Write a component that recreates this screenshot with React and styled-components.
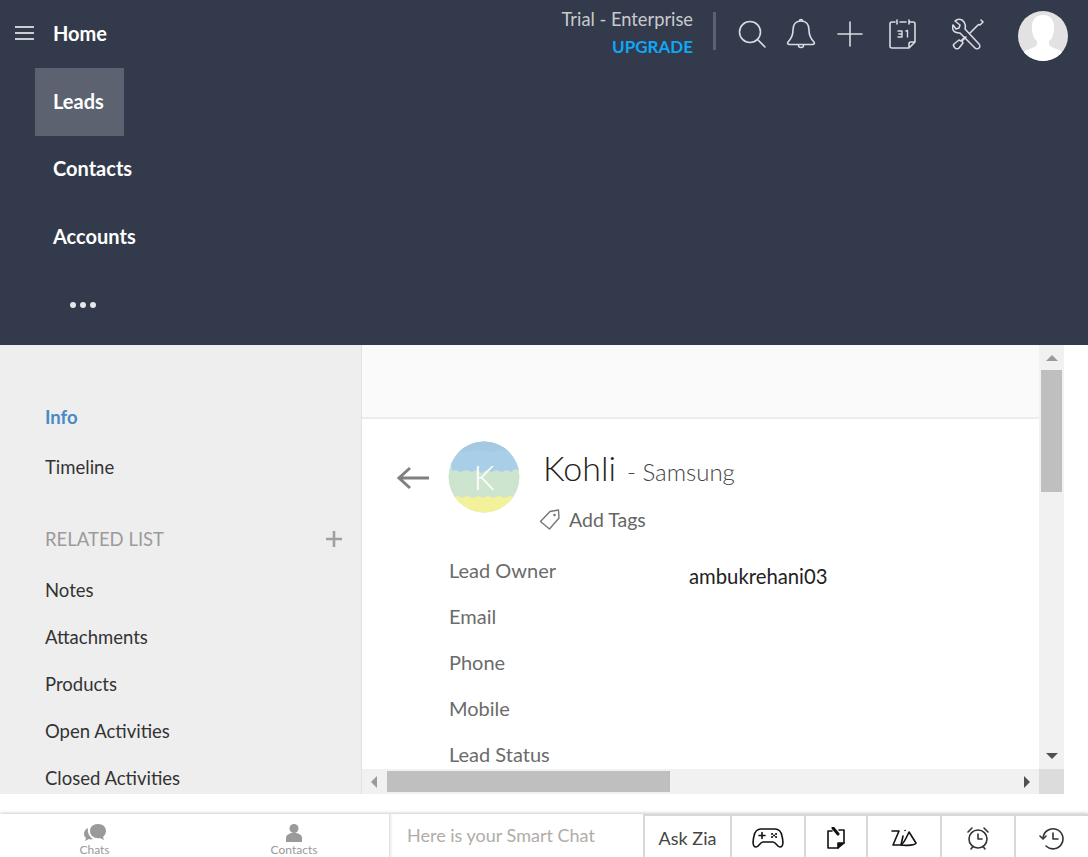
import React from "react";
import styled, { createGlobalStyle } from "styled-components";

const Global = createGlobalStyle`
  html, body { margin: 0; padding: 0; background: #fff; }
  body { font-family: "Lato", "Open Sans", sans-serif; overflow: hidden; }
  * { box-sizing: border-box; }
`;

const Page = styled.div`
  width: 1088px;
  height: 857px;
  display: flex;
  flex-direction: column;
  overflow: hidden;
`;

/* ---- top bar ---- */
const Header = styled.header`
  height: 345px;
  flex: none;
  background: #333a4b;
  display: flex;
  flex-direction: column;
`;

const TopRow = styled.div`
  height: 68px;
  flex: none;
  display: flex;
  align-items: center;
  padding: 0 20px 0 15px;
`;

const Burger = styled.div`
  width: 19px;
  height: 14px;
  margin-right: 19px;
  margin-bottom: 2px;
  display: flex;
  flex-direction: column;
  justify-content: space-between;
  span {
    height: 2px;
    background: #fff;
    opacity: 0.75;
  }
`;

const HomeLink = styled.div`
  color: #fff;
  font-size: 20px;
  font-weight: 700;
  flex: 1;
  margin-bottom: 3px;
`;

const Trial = styled.div`
  width: 152px;
  padding-right: 20px;
  text-align: right;
  display: flex;
  flex-direction: column;
  gap: 7px;
  margin-bottom: 4px;
`;

const TrialText = styled.div`
  color: #c8cad0;
  font-size: 18.3px;
  line-height: 22px;
  white-space: nowrap;
`;

const Upgrade = styled.div`
  color: #0fa7f5;
  font-size: 17px;
  font-weight: 700;
  line-height: 20px;
`;

const Divider = styled.div`
  width: 3px;
  height: 38px;
  background: #5b6170;
  margin-right: 22px;
  margin-bottom: 7px;
`;

const TopIcon = styled.svg`
  flex: none;
  margin-right: ${(p) => p.$gap || 0}px;
  fill: none;
  stroke: #d9dbe0;
  stroke-width: 1.6;
  stroke-linecap: round;
  stroke-linejoin: round;
`;

const Avatar = styled.div`
  width: 50px;
  height: 50px;
  border-radius: 50%;
  overflow: hidden;
  background: #e2e2e2;
  margin-left: 34px;
  margin-top: 3px;
`;

const NavList = styled.nav`
  display: flex;
  flex-direction: column;
  align-items: flex-start;
  padding-left: 35px;
`;

const NavItem = styled.div`
  height: 67.5px;
  padding: 0 20px 2px 18px;
  display: flex;
  align-items: center;
  color: #fff;
  font-size: 20px;
  font-weight: 700;
  background: ${(p) => (p.$active ? "#5c626f" : "transparent")};
`;

const Dots = styled.div`
  display: flex;
  gap: 4px;
  padding-left: 17px;
  margin-top: 3px;
  span {
    width: 6px;
    height: 6px;
    border-radius: 50%;
    background: #e6e7ea;
  }
`;

/* ---- middle ---- */
const Body = styled.div`
  height: 449px;
  flex: none;
  display: flex;
  overflow: hidden;
`;

const Side = styled.aside`
  width: 362px;
  flex: none;
  background: #eeeeee;
  border-right: 1px solid #e2e2e2;
  padding: 60px 19px 0 45px;
  overflow: hidden;
`;

const SideItem = styled.div`
  font-size: 18.5px;
  line-height: 24px;
  color: ${(p) => (p.$active ? "#4a88c7" : "#333")};
  font-weight: ${(p) => (p.$active ? 700 : 400)};
  margin-bottom: ${(p) => p.$mb || 23}px;
`;

const RelatedHead = styled.div`
  display: flex;
  align-items: center;
  justify-content: space-between;
  height: 24px;
  margin-bottom: 27px;
  color: #9b9b9b;
  font-size: 18.5px;
`;

const Main = styled.div`
  width: 702px;
  flex: none;
  display: grid;
  grid-template-columns: 677px 25px;
  grid-template-rows: 424px 25px;
`;

const Content = styled.div`
  overflow: hidden;
  background: #fff;
`;

const Strip = styled.div`
  height: 74px;
  background: #fafafa;
  border-bottom: 2px solid #ececec;
`;

const Record = styled.div`
  padding: 22px 0 0 34px;
`;

const RecordHead = styled.div`
  display: flex;
  align-items: flex-start;
`;

const Back = styled.svg`
  margin: 25px 18px 0 0;
  flex: none;
`;

const Photo = styled.svg`
  flex: none;
  margin-right: 23px;
`;

const TitleBlock = styled.div`
  display: flex;
  flex-direction: column;
`;

const Title = styled.div`
  display: flex;
  align-items: baseline;
  gap: 11px;
  height: 48px;
  padding-top: 6px;
`;

const Name = styled.span`
  font-size: 34px;
  font-weight: 300;
  color: #222;
`;

const Company = styled.span`
  font-size: 24px;
  font-weight: 300;
  color: #444;
`;

const TagRow = styled.div`
  display: flex;
  align-items: center;
  gap: 8px;
  margin-top: 19px;
  margin-left: -4px;
  color: #666;
  font-size: 19.5px;
`;

const Fields = styled.div`
  display: flex;
  flex-direction: column;
  padding-left: 53px;
  margin-top: 25px;
`;

const Field = styled.div`
  display: flex;
  height: 46px;
`;

const Label = styled.div`
  width: 240px;
  font-size: 20px;
  line-height: 28px;
  color: #6b6b6b;
`;

const Value = styled.div`
  font-size: 20.3px;
  line-height: 24px;
  padding-top: 8px;
  color: #222;
`;

const VBar = styled.div`
  background: #f1f1f1;
  display: flex;
  flex-direction: column;
  align-items: center;
  padding-top: 10px;
  padding-bottom: 10px;
`;

const VThumb = styled.div`
  width: 21px;
  height: 122px;
  background: #bfbfbf;
  margin-top: 9px;
  margin-bottom: auto;
`;

const HBar = styled.div`
  background: #f1f1f1;
  display: flex;
  align-items: center;
  padding: 0 9px 0 9px;
`;

const HThumb = styled.div`
  width: 283px;
  height: 21px;
  background: #bfbfbf;
  margin-left: 10px;
  margin-right: auto;
`;

const Corner = styled.div`
  background: #dcdcdc;
`;

const Up = styled.div`
  width: 0;
  height: 0;
  border-left: 6px solid transparent;
  border-right: 6px solid transparent;
  border-bottom: 6px solid #9a9a9a;
`;

const Down = styled(Up)`
  border-bottom: 0;
  border-top: 6px solid #505050;
`;

const LeftArrow = styled.div`
  width: 0;
  height: 0;
  border-top: 6px solid transparent;
  border-bottom: 6px solid transparent;
  border-right: 6px solid #9a9a9a;
`;

const RightArrow = styled.div`
  width: 0;
  height: 0;
  border-top: 6px solid transparent;
  border-bottom: 6px solid transparent;
  border-left: 6px solid #505050;
`;

/* ---- bottom bar ---- */
const Footer = styled.footer`
  margin-top: 20px;
  height: 43px;
  flex: none;
  display: flex;
  background: #fff;
  box-shadow: 0 -1px 3px rgba(0, 0, 0, 0.2);
`;

const Tab = styled.div`
  width: ${(p) => p.$w}px;
  padding-left: ${(p) => p.$pl || 0}px;
  flex: none;
  display: flex;
  flex-direction: column;
  align-items: center;
  padding-top: 10px;
  font-size: 12px;
  line-height: 13px;
  color: #9a9a9a;
  gap: 1px;
`;

const SmartChat = styled.div`
  width: 254px;
  flex: none;
  border-left: 1px solid #e2e2e2;
  box-shadow: inset 3px 0 3px -2px rgba(0, 0, 0, 0.1);
  padding-left: 17px;
  font-size: 18px;
  line-height: 43px;
  color: #b0aca8;
`;

const ToolCell = styled.div`
  width: ${(p) => p.$w}px;
  flex: none;
  border-left: 2px solid #d8d8d8;
  border-top: 2px solid #d8d8d8;
  display: flex;
  align-items: center;
  justify-content: center;
  font-size: 18px;
  color: #444;
  padding-top: 3px;
`;

const ToolIcon = styled.svg`
  fill: none;
  stroke: ${(p) => p.$stroke || "#111"};
  stroke-width: 1.6;
  stroke-linecap: round;
  stroke-linejoin: round;
`;

const sideLinks = ["Notes", "Attachments", "Products", "Open Activities", "Closed Activities"];
const fields = [
  ["Lead Owner", "ambukrehani03"],
  ["Email"],
  ["Phone"],
  ["Mobile"],
  ["Lead Status"],
];

export default function App() {
  return (
    <Page>
      <Global />
      <Header>
        <TopRow>
          <Burger><span /><span /><span /></Burger>
          <HomeLink>Home</HomeLink>
          <Trial>
            <TrialText>Trial - Enterprise</TrialText>
            <Upgrade>UPGRADE</Upgrade>
          </Trial>
          <Divider />
          <TopIcon width="28" height="28" viewBox="0 0 28 28" $gap={20}>
            <circle cx="12" cy="12" r="10.5" />
            <path d="M19.5 19.5L27 27" />
          </TopIcon>
          <TopIcon width="30" height="32" viewBox="0 0 30 32" $gap={21}>
            <path d="M15 3c-5.500 0-8 4-8 9 0 6-2 9-5 12-1 1.500 0 2.500 1.500 2.500h23c1.500 0 2.500-1 1.500-2.500-3-3-5-6-5-12 0-5-2.500-9-8-9z" />
            <path d="M13.500 3a1.500 1.500 0 0 1 3 0M12.500 27.500a2.500 2 0 0 0 5 0" />
          </TopIcon>
          <TopIcon width="26" height="26" viewBox="0 0 26 26" $gap={26}>
            <path d="M13 1v24M1 13h24" />
          </TopIcon>
          <TopIcon width="28" height="30" viewBox="0 0 28 30" $gap={35}>
            <path d="M6 3H3a2 2 0 0 0-2 2v22a2 2 0 0 0 2 2h17l6-6V5a2 2 0 0 0-2-2h-3M11 3h6M8 1v4M20 1v4M20 29v-4a2 2 0 0 1 2-2h4" />
            <path d="M9 12h4v3h-3h3v3H9M17 12l1.500-.5V18" strokeWidth="1.400" />
          </TopIcon>
          <TopIcon width="32" height="32" viewBox="0 0 32 32">
            <path d="M10 2c-2-1-5-1-7 1l5 4-1 3-3 1-3-4c-1 3 0 6 2 7 2 1 4 1 5 1l15 15c1 1 3 1 4 0s1-3 0-4L13 11c1-3 0-7-3-9z" />
            <path d="M29 2l2 2-3 3-1.500-.5L18 15M14 19l-4 4 1 2-4 5c-1 1-3 1-4 0s-2-3-1-4l5-4 2 1 4-4" />
          </TopIcon>
          <Avatar>
            <svg width="50" height="50" viewBox="0 0 50 50">
              <path fill="#fff" d="M25 4c-8 0-12 6-11 15 .5 5 2 9 5 11v4c-1 2-8 4-12 6l-3 3c5 5 13 7 21 7s16-2 21-7l-3-3c-4-2-11-4-12-6v-4c3-2 4.500-6 5-11 1-9-3-15-11-15z" />
            </svg>
          </Avatar>
        </TopRow>
        <NavList>
          <NavItem $active>Leads</NavItem>
          <NavItem>Contacts</NavItem>
          <NavItem>Accounts</NavItem>
          <NavItem><Dots><span /><span /><span /></Dots></NavItem>
        </NavList>
      </Header>

      <Body>
        <Side>
          <SideItem $active $mb={26}>Info</SideItem>
          <SideItem $mb={48}>Timeline</SideItem>
          <RelatedHead>
            RELATED LIST
            <svg width="16" height="16" viewBox="0 0 16 16">
              <path d="M8 0v16M0 8h16" stroke="#a0a0a0" strokeWidth="2.600" />
            </svg>
          </RelatedHead>
          {sideLinks.map((s) => <SideItem key={s}>{s}</SideItem>)}
        </Side>
        <Main>
          <Content>
            <Strip />
            <Record>
              <RecordHead>
                <Back width="34" height="24" viewBox="0 0 34 24" fill="none" stroke="#808080" strokeWidth="3">
                  <path d="M33 12H3M14 2L3 12l11 10" />
                </Back>
                <Photo width="72" height="72" viewBox="0 0 72 72">
                  <defs>
                    <clipPath id="disc"><circle cx="36" cy="36" r="35.500" /></clipPath>
                  </defs>
                  <g clipPath="url(#disc)">
                    <rect width="72" height="72" fill="#cde5cf" />
                    <path d="M0 0h72v30l-5-2-4 3-5-2-4 2-6-2-4 2-6-2-4 3-6-3-4 2-6-2-6 2-4-2-4 1z" fill="#a9cfe8" />
                    <path d="M0 0h72v8l-8 2-10-1-12 2-14-2-12 2-16-2z" fill="#a5c9e3" />
                    <path d="M0 55l5 2 5-2 4 2 5-2 6 2 5-2 5 2 5-2 5 2 6-2 5 2 6-2 6 2v16H0z" fill="#f3f19a" />
                  </g>
                  <text x="36" y="49" fontFamily="Lato, sans-serif" fontSize="33" fill="#fff" fontWeight="300" textAnchor="middle">K</text>
                </Photo>
                <TitleBlock>
                  <Title>
                    <Name>Kohli</Name>
                    <Company>- Samsung</Company>
                  </Title>
                  <TagRow>
                    <svg width="22" height="22" viewBox="0 0 22 22" fill="none" stroke="#777" strokeWidth="1.400" strokeLinejoin="round">
                      <path d="M1.500 12.500L11 2.500l8.500-1.500.5 8-9.500 11z" />
                      <circle cx="15.500" cy="6" r="1.300" fill="#777" stroke="none" />
                    </svg>
                    Add Tags
                  </TagRow>
                </TitleBlock>
              </RecordHead>
              <Fields>
                {fields.map(([label, value]) => (
                  <Field key={label}>
                    <Label>{label}</Label>
                    {value && <Value>{value}</Value>}
                  </Field>
                ))}
              </Fields>
            </Record>
          </Content>
          <VBar>
            <Up />
            <VThumb />
            <Down />
          </VBar>
          <HBar>
            <LeftArrow />
            <HThumb />
            <RightArrow />
          </HBar>
          <Corner />
        </Main>
      </Body>

      <Footer>
        <Tab $w={189}>
          <svg width="24" height="18" viewBox="0 0 24 18" fill="#9a9a9a">
            <path d="M15 0c5 0 8 3 8 7 0 3-2 5-3 6l1 3-4-2c-5 1-10-2-10-7 0-4 3-7 8-7z" />
            <path d="M5 4C2 5 1 8 1 10c0 2 1 3 2 4l-1 3 4-2c1 .5 3 .5 4 0-3-2-6-6-5-11z" />
          </svg>
          Chats
        </Tab>
        <Tab $w={200} $pl={10}>
          <svg width="18" height="18" viewBox="0 0 18 18" fill="#9a9a9a">
            <circle cx="9" cy="4.500" r="4.500" />
            <path d="M1 18v-4c0-3 3-5 8-5s8 2 8 5v4z" />
          </svg>
          Contacts
        </Tab>
        <SmartChat>Here is your Smart Chat</SmartChat>
        <ToolCell $w={87}>Ask Zia</ToolCell>
        <ToolCell $w={74}>
          <ToolIcon width="34" height="24" viewBox="0 0 34 24">
            <path d="M10 3h14c4 0 6 2 7 7 1 4 2 11-2 11-3 0-4-5-7-5H12c-3 0-4 5-7 5-4 0-3-7-2-11 1-5 3-7 7-7z" />
            <path d="M8 9.500h6M11 6.500v6" />
            <path d="M21 8h.1M25 8h.1M21 11h.1M25 11h.1M23 9.500h.1" strokeWidth="2" />
          </ToolIcon>
        </ToolCell>
        <ToolCell $w={62}>
          <ToolIcon width="18" height="22" viewBox="0 0 18 22">
            <path d="M5 4H1v17h10l6-5V3h-5" />
            <path d="M6 1l5 6" strokeWidth="3" />
            <path d="M11 21v-5h6" fill="#111" />
          </ToolIcon>
        </ToolCell>
        <ToolCell $w={74}>
          <ToolIcon width="26" height="20" viewBox="0 0 26 20">
            <path d="M1 3h7L2 17h7" />
            <path d="M12 8l-2 9M14 2.500h.1" />
            <path d="M10 17c4-3 6-9 8-13 2 3 5 8 7 11 0 2-10 3-15 2z" />
          </ToolIcon>
        </ToolCell>
        <ToolCell $w={74}>
          <ToolIcon width="24" height="26" viewBox="0 0 24 26" $stroke="#333">
            <circle cx="12" cy="14" r="9" />
            <path d="M12 9v5h4M2 7l4-4M22 7l-4-4M5 24l2-2.500M19 24l-2-2.500" />
          </ToolIcon>
        </ToolCell>
        <ToolCell $w={74}>
          <ToolIcon width="26" height="24" viewBox="0 0 26 24" $stroke="#333">
            <path d="M4 12a10 10 0 1 1 3 8" />
            <path d="M1 10l3 3 3-3M14 7v6h5" />
          </ToolIcon>
        </ToolCell>
      </Footer>
    </Page>
  );
}
